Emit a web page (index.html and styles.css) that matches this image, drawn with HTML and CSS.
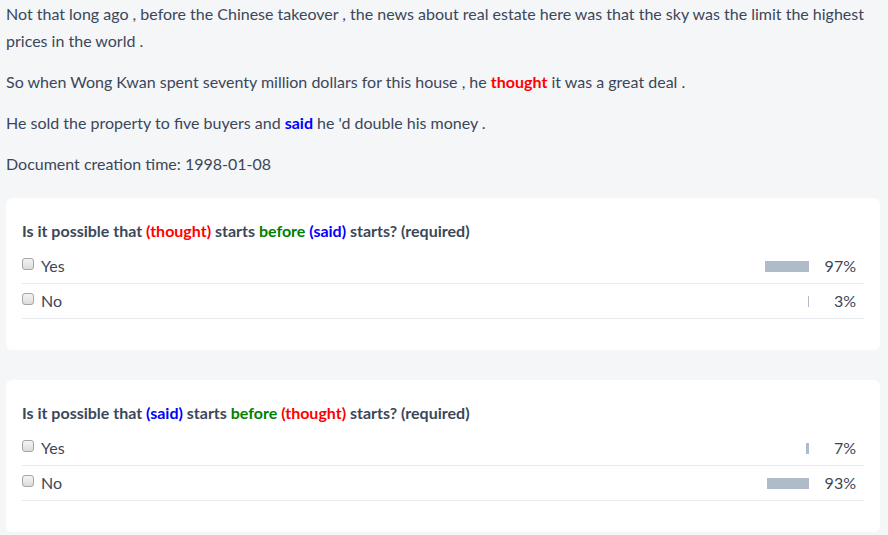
FILE: index.html
```html
<!DOCTYPE html>
<html lang="en">
<head>
    <meta charset="utf-8" />
    <title>Temporal Questions</title>
    <link rel="stylesheet" href="styles.css">
</head>
<body>
    <div class="document">
        <p>Not that long ago , before the Chinese takeover , the news about real estate here was that the sky was the limit the highest prices in the world .</p>
        <p>So when Wong Kwan spent seventy million dollars for this house , he <b class="ev-a">thought</b> it was a great deal .</p>
        <p>He sold the property to five buyers and <b class="ev-b">said</b> he 'd double his money .</p>
        <p>Document creation time: 1998-01-08</p>
    </div>

    <div class="question">
        <h3>Is it possible that <span class="ev-a">(thought)</span> starts <span class="rel">before</span> <span class="ev-b">(said)</span> starts? (required)</h3>
        <label class="option">
            <input type="checkbox">
            <span class="answer">Yes</span>
            <span class="bar-wrap"><span class="bar" style="width: 97%"></span></span>
            <span class="pct">97%</span>
        </label>
        <label class="option">
            <input type="checkbox">
            <span class="answer">No</span>
            <span class="bar-wrap"><span class="bar" style="width: 3%"></span></span>
            <span class="pct">3%</span>
        </label>
    </div>

    <div class="question">
        <h3>Is it possible that <span class="ev-b">(said)</span> starts <span class="rel">before</span> <span class="ev-a">(thought)</span> starts? (required)</h3>
        <label class="option">
            <input type="checkbox">
            <span class="answer">Yes</span>
            <span class="bar-wrap"><span class="bar" style="width: 7%"></span></span>
            <span class="pct">7%</span>
        </label>
        <label class="option">
            <input type="checkbox">
            <span class="answer">No</span>
            <span class="bar-wrap"><span class="bar" style="width: 93%"></span></span>
            <span class="pct">93%</span>
        </label>
    </div>
</body>
</html>
```

FILE: styles.css
```css
body {
    font-family: Lato, "Open Sans", sans-serif;
    font-size: 16px;
    color: #3b4759;
    background-color: #f5f6f8;
    margin: 0;
    padding: 0 8px 0 6px;
}
.document p {
    margin: 0 0 14px 0;
    line-height: 27px;
}
.document {
    margin-bottom: 21px;
}
.ev-a {
    color: #ff0000;
}
.ev-b {
    color: #0000ff;
}
.rel {
    color: #008000;
}
.question {
    background-color: #fff;
    border-radius: 6px;
    padding: 23px 16px 31px 16px;
    margin-bottom: 30px;
}
.question h3 {
    font-size: 16px;
    font-weight: bold;
    line-height: 20px;
    margin: 0 0 8px 0;
}
.option {
    display: flex;
    align-items: center;
    height: 32px;
    padding-bottom: 2px;
    border-bottom: 1px solid #e6e9ed;
}
.option input {
    appearance: none;
    width: 12px;
    height: 12px;
    margin: 0 7px 3px 0;
    border: 1px solid #a5a5a5;
    border-radius: 3px;
    background: linear-gradient(#f4f4f4, #dcdcdc);
}
.answer {
    flex: 1;
}
.bar-wrap {
    width: 45px;
    display: flex;
    justify-content: flex-end;
    padding-top: 3px;
}
.bar {
    display: block;
    height: 11px;
    background-color: #b0bbca;
}
.pct {
    width: 47px;
    text-align: right;
    padding-right: 8px;
}
```
